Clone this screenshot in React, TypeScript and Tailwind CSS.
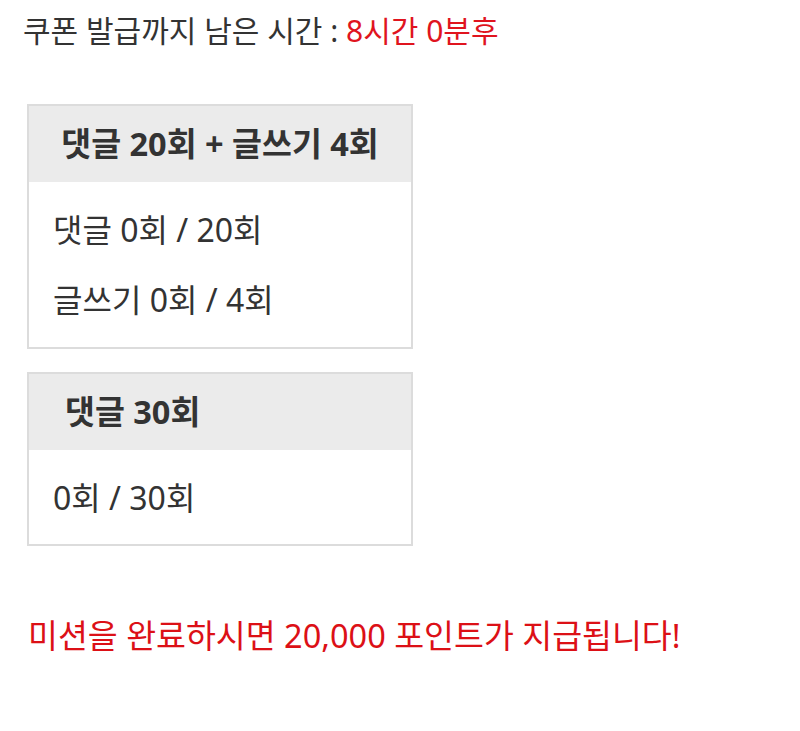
import React from 'react'

const FONT = { fontFamily: '"Noto Sans", "Noto Sans CJK KR", sans-serif' }

type Mission = {
  title: string
  align: 'center' | 'left'
  rows: string[]
}

const MISSIONS: Mission[] = [
  { title: '댓글 20회 + 글쓰기 4회', align: 'center', rows: ['댓글 0회 / 20회', '글쓰기 0회 / 4회'] },
  { title: '댓글 30회', align: 'left', rows: ['0회 / 30회'] },
]

function MissionBox({ mission, last }: { mission: Mission; last?: boolean }) {
  return (
    <div className="w-[386px] border-2 border-[#dcdcdc] bg-white">
      <div
        className={`h-[76px] bg-[#ebebeb] flex items-center text-[32.5px] font-bold text-[#333] ${
          mission.align === 'center' ? 'justify-center' : 'pl-[36px]'
        }`}
      >
        {mission.title}
      </div>
      <div className={`flex flex-col gap-[30px] px-[24px] pt-[28px] ${last ? 'pb-[26px]' : 'pb-[27px]'}`}>
        {mission.rows.map((row) => (
          <div key={row} className="text-[32px] leading-[40px] text-[#333]">
            {row}
          </div>
        ))}
      </div>
    </div>
  )
}

export default function App() {
  return (
    <div className="w-[800px] h-[731px] bg-white" style={FONT}>
      <div className="pl-[23px] pt-[12px] text-[30px] leading-[38px] text-[#333]">
        쿠폰 발급까지 남은 시간 : <span className="text-[#e0141e]">8시간 0분후</span>
      </div>
      <div className="flex flex-col gap-[23px] pl-[27px] pt-[54px]">
        {MISSIONS.map((m, i) => (
          <MissionBox key={m.title} mission={m} last={i === MISSIONS.length - 1} />
        ))}
      </div>
      <div className="pl-[28px] pt-[70px] text-[32.5px] leading-[40px] text-[#dc1016]">
        미션을 완료하시면 20,000 포인트가 지급됩니다!
      </div>
    </div>
  )
}
